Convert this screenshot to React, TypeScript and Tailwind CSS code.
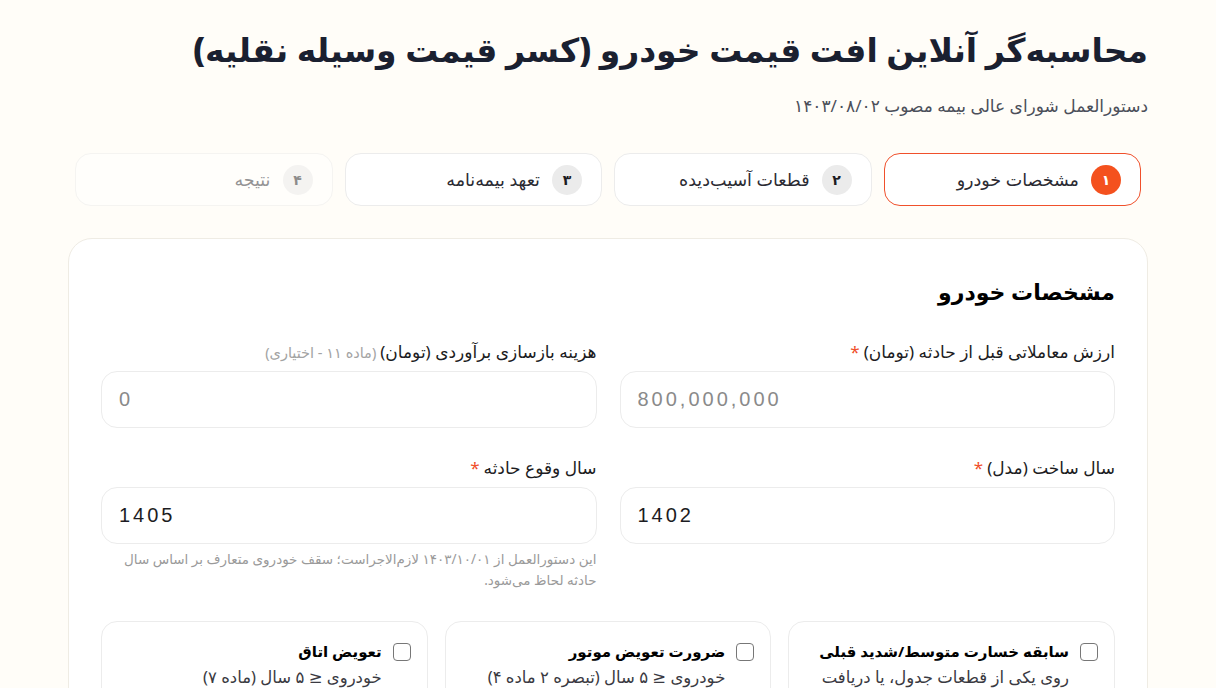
import React from "react";

const steps = [
  { n: "۱", label: "مشخصات خودرو", active: true },
  { n: "۲", label: "قطعات آسیب‌دیده" },
  { n: "۳", label: "تعهد بیمه‌نامه" },
  { n: "۴", label: "نتیجه", muted: true },
];

const options = [
  { title: "سابقه خسارت متوسط/شدید قبلی", desc: "روی یکی از قطعات جدول، یا دریافت" },
  { title: "ضرورت تعویض موتور", desc: "خودروی ≤ ۵ سال (تبصره ۲ ماده ۴)" },
  { title: "تعویض اتاق", desc: "خودروی ≤ ۵ سال (ماده ۷)" },
];

function Field({
  label,
  required,
  hint,
  value,
  placeholder,
  note,
}: {
  label: string;
  required?: boolean;
  hint?: string;
  value?: string;
  placeholder?: string;
  note?: string;
}) {
  return (
    <div className="flex flex-col">
      <label className="mb-[6px] text-[17px] leading-[26px] text-[#1c1c22]">
        {label}
        {hint && <span className="mr-1 text-[14.5px] text-[#a3a3a3]">{hint}</span>}
        {required && <span className="mr-1 text-[#f0502b]">*</span>}
      </label>
      <input
        dir="ltr"
        defaultValue={value}
        placeholder={placeholder}
        className="h-[57px] rounded-2xl border border-[#ececec] bg-white px-[17px] text-left font-['Liberation_Sans',sans-serif] text-[20px] tracking-[3px] text-[#1c1c22] outline-none placeholder:text-[#8a8a8a]"
      />
      {note && <p className="mt-[5px] text-[13.5px] leading-[21px] text-[#9a9a9a]">{note}</p>}
    </div>
  );
}

export default function App() {
  return (
    <div
      dir="rtl"
      className="min-h-screen bg-[#fffdf8] font-['Noto_Sans','DejaVu_Sans',sans-serif] text-[#1c1c22]"
    >
      <div className="mx-auto w-[1080px] pt-[22px]">
        <h1 className="text-[33px] font-black leading-[56px] text-[#1a2030]">
          محاسبه‌گر آنلاین افت قیمت خودرو (کسر قیمت وسیله نقلیه)
        </h1>
        <p className="mt-[16px] text-[17px] leading-6 text-[#4b4f5a]">
          دستورالعمل شورای عالی بیمه مصوب ۱۴۰۳/۰۸/۰۲
        </p>

        <div className="mt-[35px] grid grid-cols-4 gap-3 px-[7px]">
          {steps.map((s) => (
            <div
              key={s.n}
              className={`flex h-[53px] items-center gap-3 rounded-2xl border bg-white px-[19px] ${
                s.active ? "border-[#f0502b]" : "border-[#ececec]"
              } ${s.muted ? "opacity-50" : ""}`}
            >
              <span
                className={`flex h-[30px] w-[30px] items-center justify-center rounded-full text-[14px] font-bold ${
                  s.active ? "bg-[#f4511e] text-white" : "bg-[#ebebeb] text-[#1c1c22]"
                }`}
              >
                {s.n}
              </span>
              <span className="text-[17.5px] text-[#2b2b33]">{s.label}</span>
            </div>
          ))}
        </div>

        <div className="mt-8 rounded-3xl border border-[#efece4] bg-white px-8 pt-[34px]">
          <h2 className="text-[22px] font-black leading-9 text-black">مشخصات خودرو</h2>

          <div className="mt-[30px] grid grid-cols-2 gap-x-[23px] gap-y-[27px]">
            <Field label="ارزش معاملاتی قبل از حادثه (تومان)" required placeholder="800,000,000" />
            <Field label="هزینه بازسازی برآوردی (تومان)" hint="(ماده ۱۱ - اختیاری)" placeholder="0" />
            <Field label="سال ساخت (مدل)" required value="1402" />
            <Field
              label="سال وقوع حادثه"
              required
              value="1405"
              note="این دستورالعمل از ۱۴۰۳/۱۰/۰۱ لازم‌الاجراست؛ سقف خودروی متعارف بر اساس سال حادثه لحاظ می‌شود."
            />
          </div>

          <div className="mt-[30px] grid grid-cols-3 gap-[17px] pb-8">
            {options.map((o) => (
              <label
                key={o.title}
                className="flex items-start gap-[11px] rounded-2xl border border-[#ececec] px-[16px] pt-[17px] pb-5"
              >
                <input
                  type="checkbox"
                  className="mt-[4px] h-[18px] w-[18px] shrink-0 appearance-none rounded-[4px] border border-[#777] bg-white"
                />
                <div>
                  <div className="whitespace-nowrap text-[15px] font-bold leading-6 text-black">{o.title}</div>
                  <div className="mt-[2px] text-[16.5px] leading-6 text-[#3a3a42]">{o.desc}</div>
                </div>
              </label>
            ))}
          </div>
        </div>
      </div>
    </div>
  );
}
